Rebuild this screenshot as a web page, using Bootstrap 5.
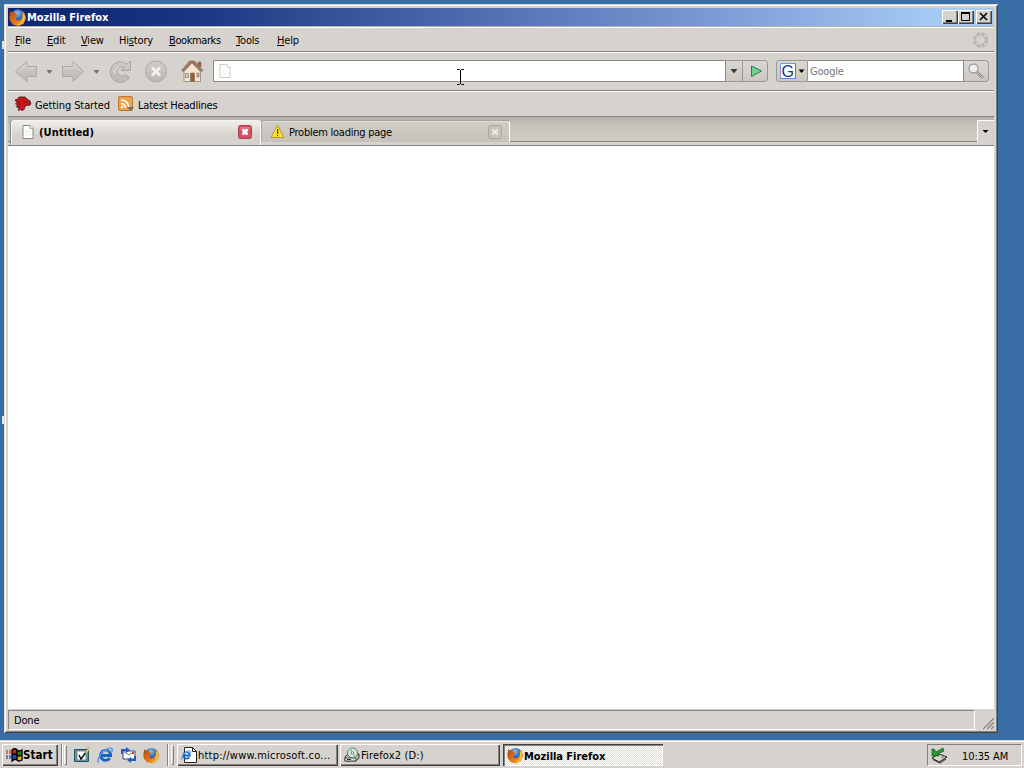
<!DOCTYPE html>
<html lang="en">
<head>
<meta charset="utf-8">
<meta name="viewport" content="width=device-width, initial-scale=1">
<title>Mozilla Firefox</title>
<link href="https://cdn.jsdelivr.net/npm/bootstrap@5.3.0/dist/css/bootstrap.min.css" rel="stylesheet">
<style>
:root{--face:#d6d3ce;--line:#848280}
*{box-sizing:border-box}
body{width:1024px;height:768px;background:#396da5;font:11px/14px "DejaVu Sans Condensed","DejaVu Sans",sans-serif;font-stretch:condensed;letter-spacing:-.17px;color:#000;cursor:default}
svg{display:block;flex:none}
.desk{height:740px;padding:4px 26px 7px 4px}
.win{height:729px;padding:4px 4px 3px;background:var(--face);border:0;box-shadow:inset 1px 1px #dedbd6,inset -1px -1px #404040,inset 2px 2px #fff,inset -2px -2px #848280}
.titlebar{height:18px;background:linear-gradient(90deg,#0b246d 0%,#193580 18%,#4c68ac 45%,#7997d3 70%,#a5caf3 94%);color:#fff;padding:0 2px 0 1px}
b{font-family:"DejaVu Sans Condensed","DejaVu Sans",sans-serif;font-weight:700;letter-spacing:-.04px}
.cap{width:16px;height:14px;background:var(--face);box-shadow:inset 1px 1px #fff,inset -1px -1px #404040,inset -2px -2px #848280}
.menus{height:26px;padding:1px 5px 0 7px;border-top:1px solid #b5b2ad;border-bottom:1px solid var(--line);box-shadow:inset 0 1px #fff}
.menus span{white-space:nowrap;flex:none;padding-top:2px}
.tools{height:39px;border-top:1px solid #fff;border-bottom:1px solid var(--line);padding:0 0 2px 6px}
.field{height:22px;border:1px solid #8d8b87;background:#fff}
.fbtn{height:22px;border:1px solid #9b9893;background:linear-gradient(#dad7d2,#ccc9c3)}
.marks{height:26px;border-top:1px solid #fff;border-bottom:1px solid var(--line);padding-left:6px}
.marks span{padding-top:3px}
.strip{height:29px;background:linear-gradient(#b5b1ab,#c8c4bc 8px,#ceccc3 25px);border-bottom:1px solid var(--line);box-shadow:inset 0 -3px #d6d3ce,inset 0 -4px #85837f;padding-left:3px}
.tab{height:23px;margin-top:3px;border:1px solid #f5f3ef;border-bottom:0;border-radius:3px 3px 0 0}
.tab-on{width:250px;background:linear-gradient(#f0eeeb,#d6d3ce 60%);height:25px;border-right:1px solid #fff;box-shadow:-1px 0 #8d8b87;padding-bottom:2px}
.tab-off{width:249px;background:linear-gradient(#d0cdc7,#c6c2bb);border-color:#a8a49e;border-right-color:#fff;box-shadow:inset 0 1px #e4e1dc;height:22px}
.page{height:563px;background:#fff}
.status{height:21px;padding-top:1px}
.pane{width:967px;height:20px;border:1px solid;border-color:#848280 #fff #fff #848280;padding:2px 0 0 5px}
.taskbar{height:28px;background:var(--face);box-shadow:inset 0 1px #dedbd6,inset 0 2px #fff;padding:4px 2px 2px}
.raised{height:22px;box-shadow:inset 1px 1px #fff,inset -1px -1px #404040,inset -2px -2px #848280}
.grip{width:3px;height:20px;border:1px solid;border-color:#fff #848280 #848280 #fff}
.vline{width:2px;height:22px;border-left:1px solid #848280;border-right:1px solid #fff}
.task{width:160px;padding-left:4px}
.task span{padding-top:1px}
.pressed{height:22px;width:160px;padding-left:4px;background:repeating-conic-gradient(#fff 0 25%,#dfdcd7 0 50%) 0 0/2px 2px;box-shadow:inset 1px 1px #404040,inset 2px 2px #848280,inset -1px -1px #fff}
.tray{width:95px;height:22px;border:1px solid;border-color:#848280 #fff #fff #848280}
.slice{position:absolute;left:2px;width:2px;background:#dce7f2}
.ibeam{position:absolute;left:456px;top:69px}
</style>
</head>
<body class="overflow-hidden position-relative">
<svg width="0" height="0" class="position-absolute">
<defs>
<radialGradient id="globe" cx=".45" cy=".25" r=".8"><stop offset="0" stop-color="#8ac4e8"/><stop offset=".5" stop-color="#2b66b0"/><stop offset="1" stop-color="#132a70"/></radialGradient>
<linearGradient id="fur" x1="0" y1="0" x2="1" y2="1"><stop offset="0" stop-color="#a84610"/><stop offset=".55" stop-color="#e87818"/><stop offset="1" stop-color="#f4c038"/></linearGradient>
<linearGradient id="dim" x1="0" y1="0" x2="0" y2="1"><stop offset="0" stop-color="#d0cdc8"/><stop offset="1" stop-color="#bbb8b2"/></linearGradient>
<symbol id="fox" viewBox="0 0 16 16"><circle cx="8.500" cy="7.500" r="7" fill="url(#globe)"/><path d="M1 3 2 1.500 3 3.200 5.500 3 6.500 5 8.500 5.500 7 7 6 9 8 11 11 10 13 7 12.500 4 13 2 15.200 5 16 9 13.500 14 9 16 4 14.800.8 11 .3 7Z" fill="url(#fur)"/><path d="M13 3q3 4 1 8-2 4-6 4 5-2 5-6Z" fill="#f8c83c"/></symbol>
<symbol id="sheet" viewBox="0 0 12 14"><path d="M1 .5h7l3 3v10H1Z" fill="#fff" stroke="#8b8985"/><path d="M8 .5v3h3" fill="#e8e6e2" stroke="#aaa8a4"/><path d="M3 6h6M3 8h6M3 10h6" stroke="#ecebe8"/></symbol>
<symbol id="ie" viewBox="0 0 16 16"><path d="M12 10.500a4.700 4.700 0 1 1 .8-2.500H4" fill="none" stroke="#1762c6" stroke-width="2.700"/><path d="M1.500 14.500C-1 12 5 3 11 1.300c3-.8 4.300.6 2.700 3.200" fill="none" stroke="#4898e8" stroke-width="1.400"/><path d="M5 5q3-2.500 6 0" fill="none" stroke="#79bcf5"/></symbol>
</defs></svg>

<div class="slice" style="top:41px;height:8px"></div>
<div class="slice" style="top:416px;height:8px"></div>

<main class="desk">
<section class="win d-flex flex-column">
  <header class="titlebar d-flex align-items-center">
    <svg width="17" height="17"><use href="#fox"/></svg><b style="margin-left:1px;padding-top:1px">Mozilla Firefox</b>
    <div class="d-flex ms-auto">
      <div class="cap"><svg width="16" height="14"><path d="M4 10h6v2H4Z"/></svg></div>
      <div class="cap"><svg width="16" height="14"><path d="M3.500 3h8v7.500h-8Z" fill="none" stroke="#000"/><path d="M3 2h9v2H3Z"/></svg></div>
      <div class="cap" style="margin-left:2px"><svg width="16" height="14"><path d="m4 3 7 7M11 3l-7 7" stroke="#000" stroke-width="1.600"/></svg></div>
    </div>
  </header>
  <nav class="menus d-flex align-items-center">
    <span style="width:32px"><u>F</u>ile</span><span style="width:34px"><u>E</u>dit</span><span style="width:38px"><u>V</u>iew</span><span style="width:50px">Hi<u>s</u>tory</span><span style="width:67px;letter-spacing:-.4px"><u>B</u>ookmarks</span><span style="width:41px"><u>T</u>ools</span><span><u>H</u>elp</span>
    <svg class="ms-auto" width="18" height="18"><circle cx="9.500" cy="9" r="6" fill="none" stroke="#b6b3ae" stroke-width="3.400" stroke-dasharray="3.500 1.210"/><circle cx="9.500" cy="9" r="6" fill="none" stroke="#c8c5c0" stroke-width="1" stroke-dasharray="2.500 2.210"/></svg>
  </nav>
  <div class="tools d-flex align-items-center">
    <svg width="200" height="30" fill="url(#dim)" stroke="#aba8a3">
      <path d="M1.500 15.500 13 5.500v5h9.500v10H13v5Z"/><path d="M4 15.500 12 8.500v3.500h9" fill="none" stroke="#dedbd7"/>
      <path d="M32.500 14h6l-3 4Z" fill="#777470" stroke="none"/>
      <path d="M69.500 15.500 59 5.500v5H48.500v10H59v5Z"/><path d="M50 12h10V8.500l7 7" fill="none" stroke="#dedbd7"/>
      <path d="M79.500 14h6l-3 4Z" fill="#777470" stroke="none"/>
      <path d="M116.500 5v9.500H107l3.300-3.200a4.700 4.700 0 1 0 1 7.200l4 3A10.300 10.300 0 1 1 112.700 8Z"/>
      <path d="M105 11q-5 2-3.500 7" fill="none" stroke="#dad7d3" stroke-width="1.500"/>
      <circle cx="142" cy="15.500" r="10.500"/><path d="m138 11.500 8 8m0-8-8 8" stroke="#f3f1ee" stroke-width="3"/>
      <g stroke="#857468" stroke-width=".7"><path d="M184 6h3v5h-3Z" fill="#9a6250"/><path d="M170 15.500 178 7l8.500 9v9.500H170Z" fill="#f3e6cf"/><path d="m167.500 14.500 8-9.500h5l8.500 9.500-2 1-9-9-8.500 9Z" fill="#a8735f"/><path d="M176.500 17h4v8.500h-4Z" fill="#9a5a32"/><path d="M171.500 17.500h3v4h-3Z" fill="#cfd7cb"/><path d="M183 17h2v4h-2Z" fill="#c8c2ae"/></g>
    </svg>
    <div class="field d-flex align-items-center" style="width:513px;margin-left:-1px;padding-left:5px"><svg width="12" height="14" opacity=".45"><use href="#sheet"/></svg></div>
    <div class="fbtn border-start-0" style="width:17px"><svg width="16" height="20"><path d="M4.500 8h7L8 12.500Z" fill="#403e3b"/></svg></div>
    <div class="fbtn border-start-0 rounded-end-1" style="width:25px"><svg width="23" height="20"><path d="m8.500 5 10 5-10 5.500Z" fill="#74cf97" stroke="#26804c"/></svg></div>
    <div class="fbtn" style="width:32px;margin-left:8px;border-radius:3px 0 0 3px"><svg width="30" height="20"><path d="M3.500 2.500h15v15h-15Z" fill="#fff"/><path d="M3.500 18V2.500H19" fill="none" stroke="#6c9be0"/><path d="M18.500 3v7" stroke="#30a050"/><path d="M18.500 10v8" stroke="#e05030"/><path d="M3 17.500h16" stroke="#568bd9"/><text x="4.500" y="15.500" font-family="Liberation Sans, sans-serif" font-size="16" letter-spacing="0" fill="#17308a">G</text><path d="M21.500 8.500h6l-3 3.500Z"/></svg></div>
    <div class="field border-start-0 d-flex align-items-center" style="width:156px;padding:3px 0 0 2px;color:#777;letter-spacing:-.2px">Google</div>
    <div class="fbtn border-start-0 rounded-end-1" style="width:25px"><svg width="24" height="20"><path d="m13 11 6 6" stroke="#908d88" stroke-width="3"/><path d="m13 11 6 6" stroke="#d4d1cc"/><circle cx="9.500" cy="7.500" r="4.500" fill="#e9edf0" stroke="#a09e9a" stroke-width="1.300"/><path d="M7 7q1-2 3-2" stroke="#fff" fill="none"/></svg></div>
  </div>
  <div class="marks d-flex align-items-center">
    <svg width="18" height="16"><path d="m1 4 3-1 1-2 3 0 3 0 2 2 3 2 1 3-2 1.500-3-.5-1 2-1 2.500-2 1-1.500-1-2 1 .5-3-2.500-.5 1-1.500-2-1.500 1.500-1.500Z" fill="#c8171c" stroke="#3b0b0c" stroke-width=".8"/><path d="m9 4 2 2.500 3-.5M4 5l2 3.500-1 2" fill="none" stroke="#7c1014"/></svg>
    <span style="margin-left:3px;width:83px;letter-spacing:-.1px" class="text-nowrap">Getting Started</span>
    <svg width="16" height="16"><rect x=".5" y=".5" width="14" height="14" rx="1.500" fill="#eba24a" stroke="#b97835"/><path d="M3 4q7 0 8 8M3 7.500q4 0 4.500 4.500" fill="none" stroke="#fff" stroke-width="1.700"/><circle cx="4" cy="11" r="1.200" fill="#fff"/><path d="M9 11h7l-3.500 4Z" fill="#78695b"/></svg>
    <span style="margin-left:4px;letter-spacing:-.2px" class="text-nowrap">Latest Headlines</span>
  </div>
  <div class="strip d-flex">
    <div class="tab tab-on d-flex align-items-center"><svg width="12" height="14" style="margin-left:10px"><use href="#sheet"/></svg><b style="margin-left:5px;padding-top:2px;letter-spacing:.1px">(Untitled)</b>
      <svg class="ms-auto" style="margin-right:8px" width="14" height="14"><rect x=".5" y=".5" width="13" height="13" rx="2" fill="#d64e62" stroke="#ad4050"/><path d="M2 2h10v3H2Z" fill="#e78692" opacity=".6"/><path d="m4.500 4.500 5 5m0-5-5 5" stroke="#fff" stroke-width="2.500"/></svg></div>
    <div class="tab tab-off d-flex align-items-center"><svg width="15" height="15" style="margin-left:8px"><path d="M7.500 1.200 14 13.500H1Z" fill="#f9df38" stroke="#c59a1d" stroke-linejoin="round"/><path d="M7 5h1.200v5H7Zm0 6h1.200v1.300H7Z" fill="#514414"/></svg><span style="margin-left:4px;padding-top:2px;letter-spacing:-.25px">Problem loading page</span>
      <svg class="ms-auto" style="margin-right:7px" width="14" height="14"><rect x=".5" y=".5" width="13" height="13" rx="1" fill="#c6c3bd" stroke="#aaa7a1"/><path d="m4.500 4.500 5 5m0-5-5 5" stroke="#eeece8" stroke-width="2"/></svg></div>
    <div class="ms-auto" style="width:17px;height:22px;margin-top:3px;background:#d6d3ce;box-shadow:inset 1px 1px #fff"><svg width="17" height="22"><path d="M5.500 10h6l-3 3Z"/></svg></div>
  </div>
  <article class="page"></article>
  <footer class="status d-flex"><div class="pane d-flex align-items-center">Done</div>
    <svg width="19" height="20"><g fill="none" stroke="#fff"><path d="m7 19 12-12M11 19l8-8M15 19l4-4"/></g><g fill="none" stroke="#848280" stroke-width="1.500"><path d="m8 19 11-11M12 19l7-7M16 19l3-3"/></g></svg></footer>
</section>
</main>

<footer class="taskbar d-flex align-items-center">
  <div class="raised d-flex align-items-center" style="width:56px;padding-left:4px">
    <svg width="17" height="16"><path d="M6 3q3-2 5 0v5q-2-2-5 0Z" fill="#c22722"/><path d="M11 3q2 2 5 0v5q-3 2-5 0Z" fill="#31792c"/><path d="M6 8q3-2 5 0v5q-2-2-5 0Z" fill="#224bc0"/><path d="M11 8q2 2 5 0v5q-3 2-5 0Z" fill="#d6b321"/><path d="M6 14V3q3-2.500 5 0 2 2 5 0v10q-3 2-5 0-2-2-5 1ZM11 3v10M6 8q3-2 5 0 2 2 5 0" fill="none" stroke="#000" stroke-width="1.300"/><path d="M0 4h2m1 0h2M0 6h2m1 0h2" stroke="#a22"/><path d="M0 9h2m1 0h2M0 11h2m1 0h2" stroke="#227"/></svg>
    <b style="font-size:11.500px;letter-spacing:.05px">Start</b></div>
  <div class="vline" style="margin-left:3px"></div><div class="grip" style="margin-left:1px"></div>
  <svg width="16" height="16" style="margin-left:7px"><path d="M.5 2.500h14v12H.5Z" fill="#4c9aa5" stroke="#24535c"/><path d="M3 4h9v9H3Z" fill="#fff" stroke="#888"/><path d="m5 8 2 4 8-11" fill="none" stroke="#111" stroke-width="1.500"/><path d="m11 5 4-5 1 2-4 5Z" fill="#e6c46b"/></svg>
  <svg width="17" height="17" style="margin-left:7px"><use href="#ie"/></svg>
  <svg width="17" height="16" style="margin-left:6px"><path d="M3 4h12v8H3Z" fill="#fffbe3" stroke="#2b499a"/><path d="m3 4 6 4 6-4" fill="none" stroke="#707da8"/><path d="M1 7V2h5V0l4 3-4 3V4H3v3ZM16 9v5h-5v2l-4-3 4-3v2h3V9Z" fill="#285bc0"/><path d="M12 5h2v2h-2Z" fill="#d44"/></svg>
  <svg width="16" height="17" style="margin-left:6px"><use href="#fox"/></svg>
  <div class="vline" style="margin-left:8px"></div><div class="grip" style="margin-left:2px"></div>
  <div class="raised task d-flex align-items-center" style="margin-left:3px;width:161px"><svg width="17" height="16"><path d="M3.500.5h8l4 4v11h-12Z" fill="#fff" stroke="#222"/><path d="M11.500.5v4h4" fill="none" stroke="#222"/><use href="#ie" x="0" y="3" width="11" height="11"/></svg><span class="text-nowrap" style="letter-spacing:.22px">http://www.microsoft.co...</span></div>
  <div class="raised task d-flex align-items-center" style="margin-left:2px"><svg width="17" height="16"><path d="m1 10 3-3h11v4l-3 3H1Z" fill="#b9b8b3" stroke="#333"/><circle cx="8.500" cy="6" r="5" fill="#d4ebe2" stroke="#52766e"/><path d="m8 6-3-4 3-1Zm1 1 4 2-3 2Z" fill="#8acaa6"/><circle cx="8.500" cy="6" r="1.400" fill="#fff" stroke="#555" stroke-width=".7"/><path d="M1 11h11v3H1Z" fill="#d8d6d1" stroke="#333" stroke-width=".7"/><path d="M3 12.500h4" stroke="#333"/></svg><span style="letter-spacing:.15px">Firefox2 (D:)</span></div>
  <div class="pressed d-flex align-items-center" style="margin-left:3px"><svg width="16" height="17"><use href="#fox"/></svg><b style="margin-left:1px;padding-top:3px">Mozilla Firefox</b></div>
  <div class="tray d-flex align-items-center ms-auto" style="padding-left:3px"><svg width="18" height="17"><path d="m1 11 7-4 8 3-8 5Z" fill="#d8d7d2" stroke="#222"/><path d="M2 12.500 9 16l6-4" fill="none" stroke="#222"/><path d="m10 11 4-2" stroke="#777"/><path d="M1 2v7h7L6.500 7 13 4l-1-3-7 4-2-3Z" fill="#299c38" stroke="#12501b" stroke-width=".7"/></svg><span class="text-nowrap" style="margin-left:13px;padding-top:3px;letter-spacing:-.1px">10:35 AM</span></div>
</footer>
<svg class="ibeam" width="10" height="17"><path d="M1 .5h2.500l1 1 1-1H8M4.500 1v14M1 15.500h2.500l1-1 1 1H8" fill="none" stroke="#000"/></svg>
<script src="https://cdn.jsdelivr.net/npm/bootstrap@5.3.0/dist/js/bootstrap.bundle.min.js"></script>
</body>
</html>
